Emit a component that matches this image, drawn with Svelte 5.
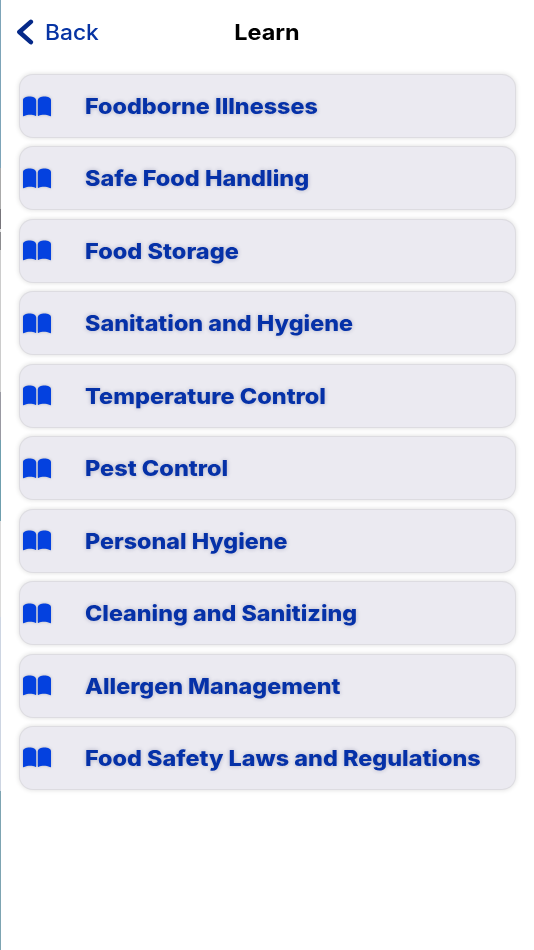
<script>
  const topics = [
    { title: 'Foodborne Illnesses', stretch: 1.085 },
    { title: 'Safe Food Handling', stretch: 1.09 },
    { title: 'Food Storage', stretch: 1.095 },
    { title: 'Sanitation and Hygiene', stretch: 1.086 },
    { title: 'Temperature Control', stretch: 1.093 },
    { title: 'Pest Control', stretch: 1.094 },
    { title: 'Personal Hygiene', stretch: 1.083 },
    { title: 'Cleaning and Sanitizing', stretch: 1.083 },
    { title: 'Allergen Management', stretch: 1.084 },
    { title: 'Food Safety Laws and Regulations', stretch: 1.088 }
  ];
</script>

<div class="screen">
  <header>
    <button class="back">
      <svg width="18" height="26" viewBox="0 0 18 26" aria-hidden="true">
        <path d="M14.8 2.9 3.4 13 14.8 23.1" />
      </svg>
      <span>Back</span>
    </button>
    <h1>Learn</h1>
  </header>

  <main>
    {#each topics as { title, stretch }}
      <button class="card">
        <svg class="book" width="28" height="21" viewBox="0 0 28 21" aria-hidden="true">
          <path d="M0 4.2C0 1.5 3 .4 6.5 .4S13.2 1.8 13.2 4.5V19.6Q12.9 20.1 12.2 19.7C9.5 18.4 4.2 18.4 1.2 20.1Q0 20.6 0 19.8Z" />
          <path d="M28 4.2C28 1.5 25 .4 21.5 .4S14.8 1.8 14.8 4.5V19.6Q15.1 20.1 15.8 19.7C18.5 18.4 23.8 18.4 26.8 20.1Q28 20.6 28 19.8Z" />
        </svg>
        <span style:transform="scaleX({stretch})">{title}</span>
      </button>
    {/each}
  </main>
</div>

<style>
  .screen {
    box-sizing: border-box;
    height: 950px;
    padding-left: 20px;
    background:
      linear-gradient(#7da4b8 0 168px, #aaa 168px 209px, #77757b 209px 229px, #e4e4e4 229px 232px, #8d8d90 232px 250px, #ccc 250px 392px, #9999a2 392px 440px, #6f9fae 440px 521px, #dadada 521px 617px, #cdd5e2 617px 791px, #7da4b2 791px) left / 1px 100% no-repeat,
      #fff;
    font-family: Inter, "Liberation Sans", sans-serif;
    overflow: hidden;
  }
  button {
    margin: 0;
    padding: 0;
    border: 0;
    background: none;
    font: inherit;
    text-align: left;
  }
  header {
    display: grid;
    grid-template-columns: 1fr auto 1fr;
    align-items: center;
    height: 64px;
    margin-left: -20px;
  }
  .back {
    display: flex;
    align-items: center;
    gap: 11px;
    padding-left: 16px;
    color: #0734a4;
    font-size: 21.5px;
    font-weight: 500;
  }
  .back span {
    transform: scaleX(1.06);
    transform-origin: left;
  }
  .back path {
    fill: none;
    stroke: #052989;
    stroke-width: 4.6;
    stroke-linecap: round;
    stroke-linejoin: round;
  }
  h1 {
    margin: 0;
    font-size: 21.5px;
    font-weight: 700;
    color: #000;
    transform: scaleX(1.09);
  }
  main {
    display: flex;
    flex-direction: column;
    gap: 10.45px;
    width: 495px;
    padding-top: 11px;
  }
  .card {
    box-sizing: border-box;
    display: flex;
    align-items: center;
    height: 62px;
    padding-left: 3px;
    border-radius: 13px;
    background: #ebeaf1;
    box-shadow: 0 0 0 1px #dddce1, 0 0 5px 1px rgba(0, 0, 0, 0.14);
    color: #0531a8;
    font-size: 21.5px;
    font-weight: 800;
    white-space: nowrap;
  }
  .book {
    margin-right: 33.5px;
    fill: #0441df;
    filter: drop-shadow(0 0 1.5px rgba(0, 0, 0, 0.2));
  }
  .card span {
    transform-origin: left;
    text-shadow: 0 0 4px rgba(20, 30, 90, 0.28);
  }
</style>
